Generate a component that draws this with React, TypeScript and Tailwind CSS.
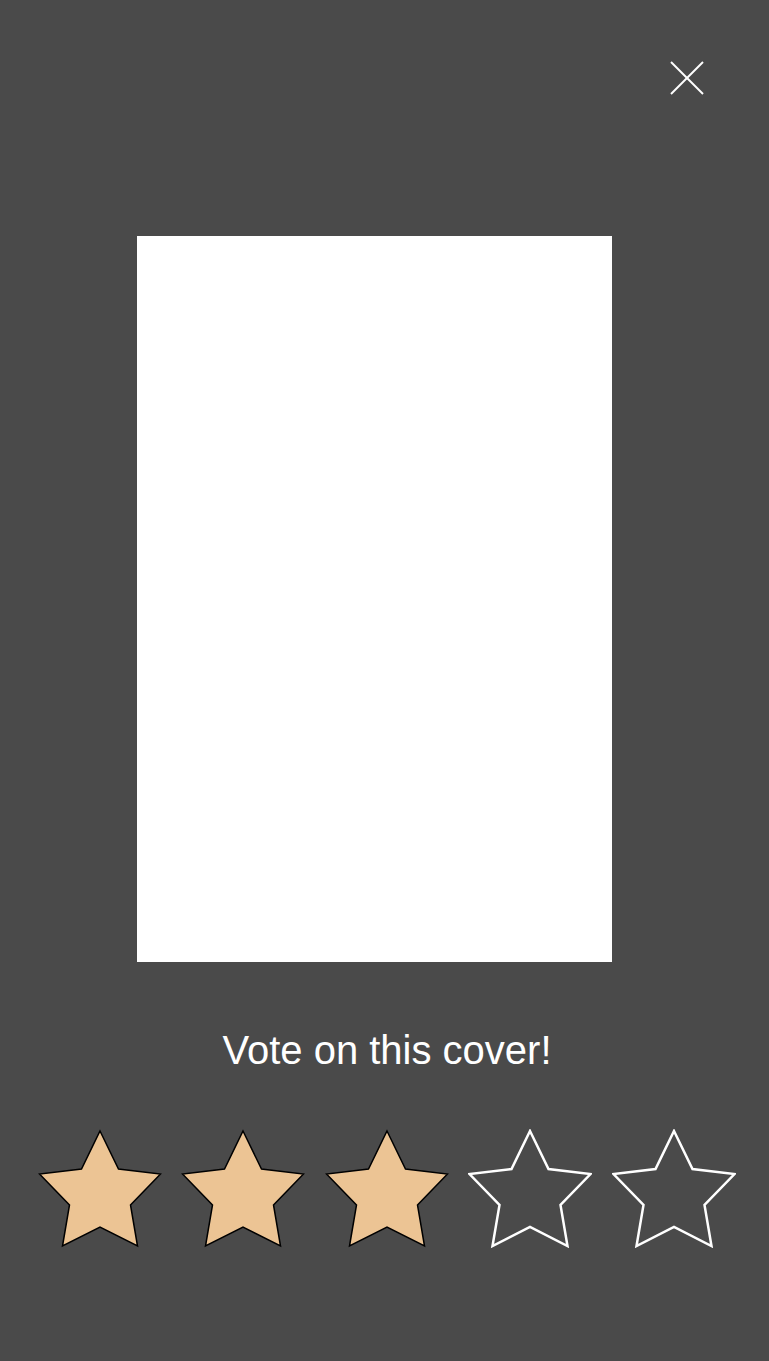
import React from 'react';

const STAR_POINTS =
  '62,2 80.5,40 122.5,45 92.5,76 99.5,117 62,98 24.5,117 31.5,76 1.5,45 43.5,40';

function Star({ filled }: { filled: boolean }) {
  return (
    <svg width="124" height="120" viewBox="0 0 124 120" className="shrink-0">
      {filled ? (
        <polygon points={STAR_POINTS} fill="#ecc494" stroke="#000" strokeWidth="1.5" strokeLinejoin="miter" />
      ) : (
        <polygon points={STAR_POINTS} fill="none" stroke="#fff" strokeWidth="2.5" strokeLinejoin="miter" />
      )}
    </svg>
  );
}

export default function App() {
  const rating = 3;

  return (
    <div className="w-[769px] h-[1361px] bg-[#4a4a4a] overflow-hidden" style={{ fontFamily: '"Liberation Sans", Arial, sans-serif' }}>
      <div className="flex justify-end pt-[61px] pr-[65px]">
        <button aria-label="Close" className="block">
          <svg width="34" height="34" viewBox="0 0 34 34">
            <line x1="1" y1="1" x2="33" y2="33" stroke="#fff" strokeWidth="2" />
            <line x1="33" y1="1" x2="1" y2="33" stroke="#fff" strokeWidth="2" />
          </svg>
        </button>
      </div>

      <div className="mt-[141px] ml-[137px] w-[475px] h-[726px] bg-white" />

      <p className="mt-[64px] pl-[5px] text-center text-white text-[40px] leading-[48px]">
        Vote on this cover!
      </p>

      <div className="mt-[55px] pl-[4px] flex justify-center gap-[19.5px]">
        {[1, 2, 3, 4, 5].map((n) => (
          <Star key={n} filled={n <= rating} />
        ))}
      </div>
    </div>
  );
}
